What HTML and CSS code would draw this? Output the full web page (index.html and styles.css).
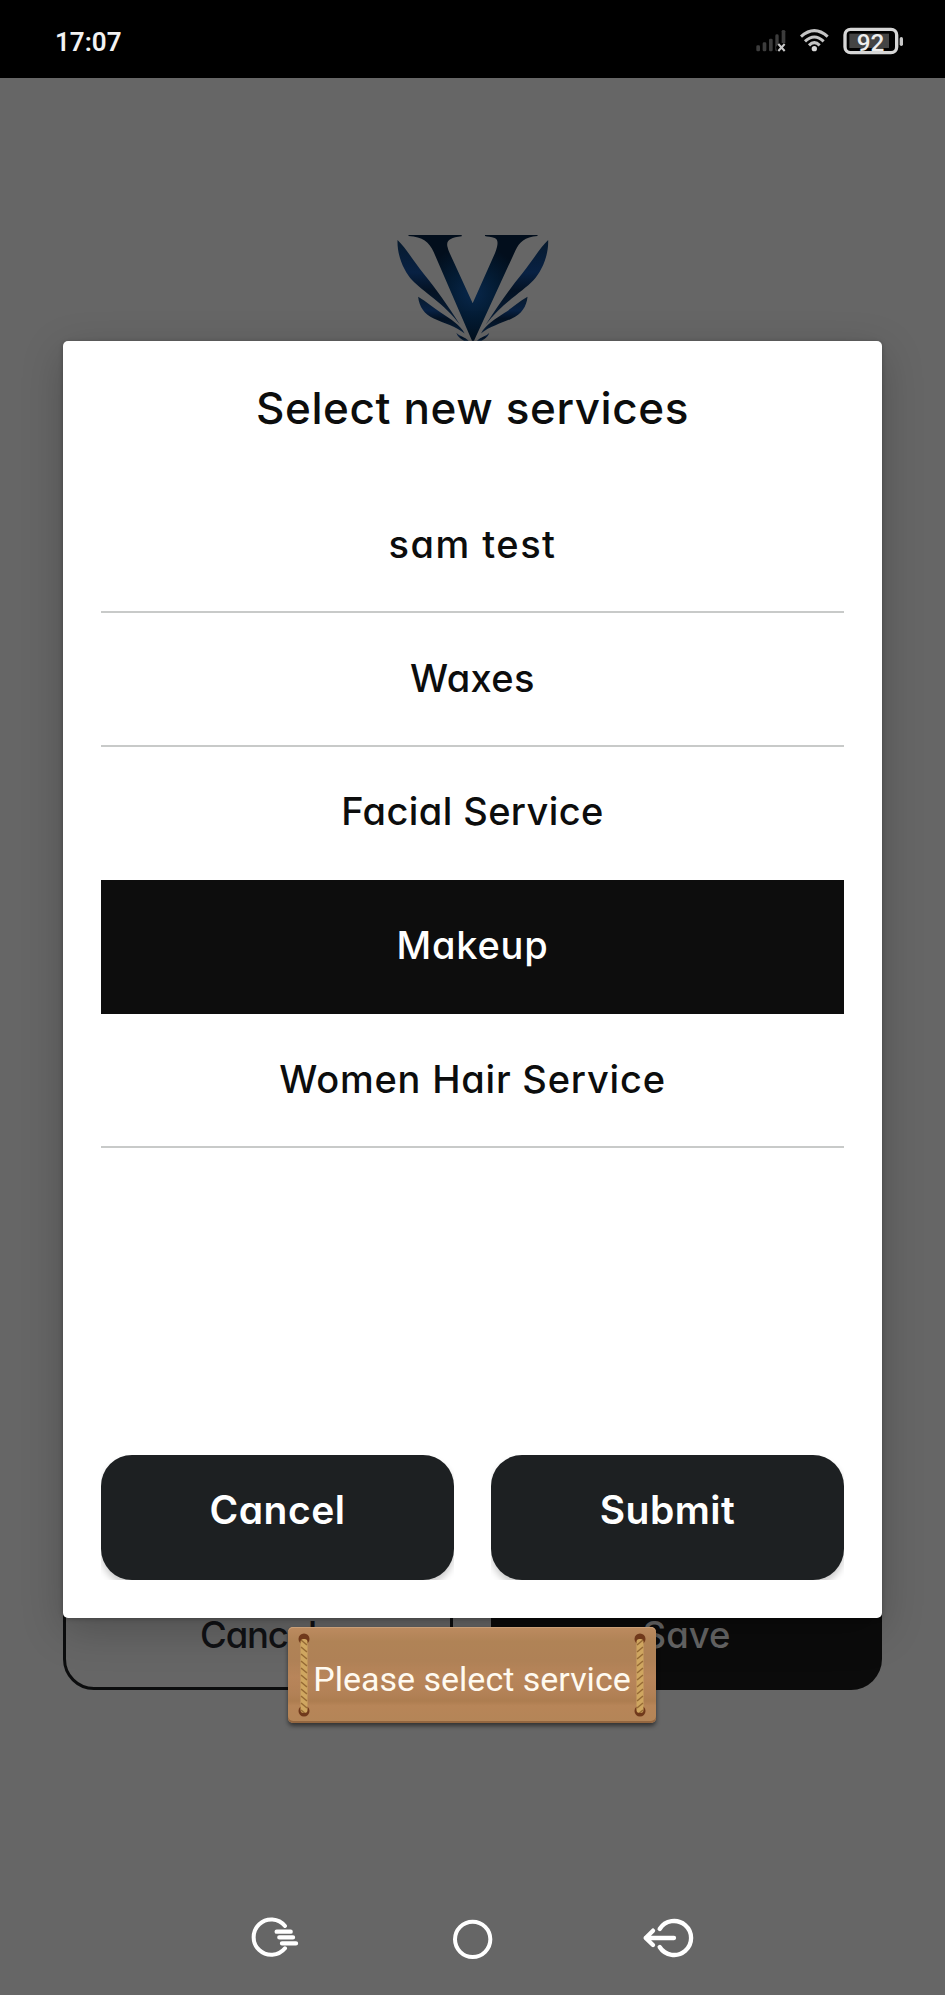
FILE: index.html
```html
<!DOCTYPE html>
<html lang="en">
<head>
<meta charset="utf-8">
<title>Select new services</title>
<link rel="stylesheet" href="styles.css">
</head>
<body>
<div class="screen">
  <header class="status">
    <span class="time">17:07</span>
    <svg class="status-icons" viewBox="0 0 540 165">
      <g fill="#3c3c3c">
        <rect x="49" y="91" width="11" height="18" rx="4"/><rect x="68" y="82" width="11" height="27" rx="4"/><rect x="87" y="71" width="11" height="38" rx="4"/><path d="M106 62q0-4 5-4t5 4v24l-8 10 3 13q-5 0-5-4z"/><path d="M125 49q0-4 5-4t6 4v35h-11z"/>
      </g>
      <path d="M115 87l19 21M134 87l-19 21" stroke="#c8c8c8" stroke-width="6"/>
      <g fill="none" stroke="#c4c4c4" stroke-width="9">
        <path d="M183 65Q223 29 263 65"/><path d="M195 79Q223 53 251 79"/><path d="M207 91Q223 75 239 91"/>
      </g>
      <circle cx="223" cy="101" r="8" fill="#d8d8d8"/>
      <rect x="328" y="56" width="119" height="43" fill="#444"/>
      <rect x="315" y="43" width="155" height="70" rx="17" fill="none" stroke="#d6d6d6" stroke-width="10"/>
      <rect x="479" y="66" width="10" height="27" rx="5" fill="#c8c8c8"/>
      <text class="battery" x="350" y="109" textLength="83" lengthAdjust="spacingAndGlyphs">92</text>
    </svg>
  </header>

  <main class="page">
    <svg class="logo" viewBox="0 0 570 400">
      <defs>
        <radialGradient id="blue" gradientUnits="userSpaceOnUse" cx="278" cy="220" r="150"><stop offset="0" stop-color="#08274b"/><stop offset=".5" stop-color="#031b33"/><stop offset="1" stop-color="#020e1c"/></radialGradient>
        <linearGradient id="wing" x1="0" y1="0" x2="0" y2="1"><stop offset="0" stop-color="#071a2d"/><stop offset=".38" stop-color="#082143"/><stop offset=".6" stop-color="#041223"/><stop offset="1" stop-color="#08203b"/></linearGradient>
      </defs>
      <path fill="url(#blue)" d="M85 45H245V49C212 53 198 60 202 80Q204 90 209 100L278 250 345 100Q361 60 344 54C334 50 322 50 315 48V45H473V48C435 51 418 67 407 91L282 363H276L161 97C147 65 128 51 85 48Z"/>
      <g id="feathers" fill="url(#wing)">
        <path d="M52 60C50 105 70 153 97 182C127 214 193 252 240 315C204 258 169 209 130 161C100 124 78 85 52 60Z"/>
        <path d="M114 231C117 261 133 284 161 296C193 311 226 319 254 341C240 316 211 297 184 280C160 265 141 246 114 231Z"/>
        <path d="M229 339C238 350 254 351 266 363H253C244 359 233 352 229 339Z"/>
      </g>
      <use href="#feathers" transform="matrix(-1 0 0 1 557 0)"/>
    </svg>
    <div class="page-actions">
      <div class="page-btn outlined"><span>Cancel</span></div>
      <div class="page-btn filled"><span>Save</span></div>
    </div>
  </main>

  <section class="dialog">
    <h1 class="title">Select new services</h1>
    <ul class="services">
      <li class="service wide">sam test</li>
      <li class="service tight">Waxes</li>
      <li class="service tight plain">Facial Service</li>
      <li class="service selected">Makeup</li>
      <li class="service">Women Hair Service</li>
    </ul>
    <div class="actions">
      <div class="slot"><button class="btn">Cancel</button></div>
      <div class="slot"><button class="btn">Submit</button></div>
    </div>
  </section>

  <div class="toast">
    <svg class="rope" viewBox="0 0 14 86">
      <defs>
        <pattern id="twist-left" x="3" width="8" height="7" patternUnits="userSpaceOnUse"><rect width="8" height="7" fill="#cfa660"/><path d="M1 1L7 6" stroke="#966a34" stroke-width="1.6"/></pattern>
        <pattern id="twist-right" x="3" width="8" height="7" patternUnits="userSpaceOnUse"><rect width="8" height="7" fill="#cfa660"/><path d="M1 6L7 1" stroke="#966a34" stroke-width="1.6"/></pattern>
      </defs>
      <circle cx="7" cy="7" r="5.5" fill="#70391b"/><circle cx="7" cy="79" r="5.5" fill="#70391b"/>
      <rect x="3.5" y="7" width="7" height="74" rx="3" fill="url(#twist-left)"/>
    </svg>
    <span class="toast-text">Please select service</span>
    <svg class="rope" viewBox="0 0 14 86">
      <circle cx="7" cy="7" r="5.5" fill="#70391b"/><circle cx="7" cy="79" r="5.5" fill="#70391b"/>
      <rect x="3.5" y="7" width="7" height="74" rx="3" fill="url(#twist-right)"/>
    </svg>
  </div>

  <nav class="navbar">
    <svg width="50" height="45" viewBox="90 75 150 135" fill="none" stroke="#fff" stroke-width="12" stroke-linecap="round"><path d="M195 108A53 53 0 1 0 195 175"/><path d="M170 125H212M178 142H219M186 160H228" stroke-width="13"/></svg>
    <svg width="45" height="45" viewBox="690 75 135 135" fill="none" stroke="#fff" stroke-width="12"><circle cx="758" cy="148" r="53"/></svg>
    <svg width="55" height="45" viewBox="1260 75 165 135" fill="none" stroke="#fff" stroke-width="13" stroke-linecap="round" stroke-linejoin="round"><path d="M1319 117A51 51 0 1 1 1319 171"/><path d="M1362 144H1277M1299 122L1277 144L1299 165"/></svg>
  </nav>
</div>
</body>
</html>
```
FILE: styles.css
```css
* { box-sizing: border-box; }
body { margin: 0; background: #666; }
.screen {
  position: relative;
  width: 945px;
  height: 1995px;
  display: flex;
  flex-direction: column;
  overflow: hidden;
  background: #666;
  font-family: Inter, "Liberation Sans", sans-serif;
  font-feature-settings: "cv11";
}

.status {
  height: 78px;
  background: #000;
  display: flex;
  justify-content: space-between;
  align-items: flex-start;
  padding: 15px 25px 0 55px;
}
.time { font: 600 26px/54px Roboto, sans-serif; color: #f2f2f2; }
.status-icons { width: 180px; height: 55px; }
.battery { font: 500 74px Roboto, sans-serif; fill: #eee; }

.page {
  flex: 1;
  display: flex;
  flex-direction: column;
  align-items: center;
  padding-top: 142px;
}
.logo { width: 190px; height: 133px; margin-left: 5px; }
.page-actions {
  width: 819px;
  height: 125px;
  margin-top: 1212px;
  display: grid;
  grid-template-columns: 390px 391px;
  gap: 38px;
}
.page-btn {
  display: flex;
  align-items: center;
  justify-content: center;
  padding-top: 14px;
  font: 500 36.5px/50px Inter, sans-serif;
  font-feature-settings: "cv11";
  border-radius: 31px;
}
.outlined { border: 3px solid #0c0d0e; color: #101114; letter-spacing: -1.2px; }
.filled { background: #0b0b0b; color: #666; border-radius: 0 0 31px 0; }

.dialog {
  position: absolute;
  left: 63px;
  top: 341px;
  width: 819px;
  height: 1277px;
  padding: 40px 38px 38px;
  border-radius: 5px;
  background: #fff;
  box-shadow: 0 12px 42px rgba(0, 0, 0, .22), 0 1px 4px rgba(0, 0, 0, .25);
  display: flex;
  flex-direction: column;
}
.title {
  margin: 0;
  height: 98px;
  font-size: 44px;
  font-weight: 500;
  line-height: 54px;
  letter-spacing: .6px;
  text-align: center;
  color: #0c0d0d;
  white-space: nowrap;
}
.services { margin: 0; padding: 0; list-style: none; }
.service {
  height: 133.8px;
  display: flex;
  align-items: center;
  justify-content: center;
  padding-bottom: 2px;
  border-bottom: 2px solid #c8cac9;
  font-size: 38px;
  font-weight: 500;
  letter-spacing: .8px;
  color: #0c0d0d;
}
.wide { letter-spacing: 1.5px; }
.tight { letter-spacing: .4px; }
.plain { border-color: transparent; }
.selected { background: #0d0d0d; border-color: #0d0d0d; color: #fff; }
.actions {
  margin-top: auto;
  display: grid;
  grid-template-columns: 1fr 1fr;
  gap: 37px;
}
.slot { height: 125px; overflow: hidden; }
.btn {
  width: 100%;
  height: 125px;
  border: 0;
  border-radius: 31px;
  padding: 0 0 15px;
  background: #1d2022;
  box-shadow: 0 5px 7px rgba(0, 0, 0, .2);
  font: 600 39px/50px Inter, sans-serif;
  font-feature-settings: "cv11";
  letter-spacing: .5px;
  color: #fff;
}

.toast {
  position: absolute;
  left: 288px;
  top: 1627px;
  width: 368px;
  height: 96px;
  padding: 5px 9px;
  display: flex;
  align-items: center;
  justify-content: space-between;
  border-radius: 5px;
  background: linear-gradient(#bd8b60 0, #b08356 15%, #af8156 35%, #b8855a 52%, #b28156 70%, #ad7d50 77%, #b78558 82%, #b48557 100%);
  box-shadow: inset 0 1px #caa078, inset 0 -2px #936640, 0 3px 4px rgba(0, 0, 0, .5);
}
.rope { width: 14px; height: 86px; }
.toast-text {
  font: 400 34px/50px Roboto, sans-serif;
  color: #fffaf0;
  padding-top: 8px;
  white-space: nowrap;
}

.navbar {
  position: absolute;
  left: 250px;
  top: 1915px;
  display: flex;
  gap: 150px;
}
.navbar svg:last-child { margin-left: -5px; }
```
